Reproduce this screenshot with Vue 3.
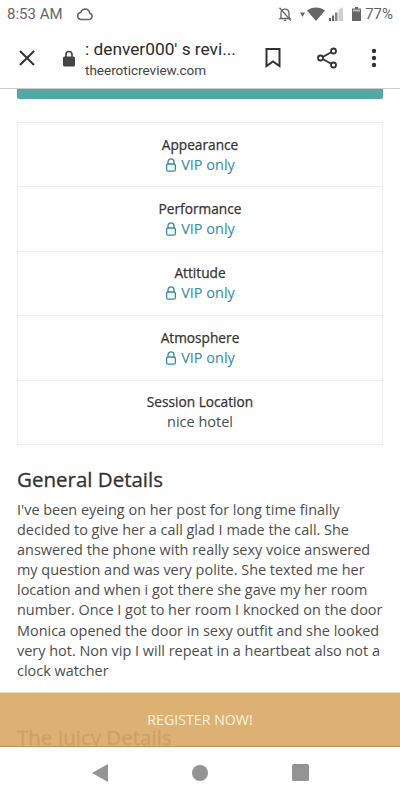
<script setup>
const rows = [
  { label: 'Appearance', locked: true },
  { label: 'Performance', locked: true },
  { label: 'Attitude', locked: true },
  { label: 'Atmosphere', locked: true },
  { label: 'Session Location', value: 'nice hotel' },
]
</script>

<template>
  <div class="phone">
    <div class="status">
      <span class="time">8:53 AM</span>
      <svg class="cloud" width="18" height="14" viewBox="0 0 18 14">
        <path d="M4.6 12.5h8.6a3.2 3.2 0 0 0 .5-6.3A4.9 4.9 0 0 0 8.9 2 5 5 0 0 0 4.6 5.6a3.5 3.5 0 0 0 0 6.9z" fill="none" stroke="#666" stroke-width="1.5" />
      </svg>
      <span class="spacer"></span>
      <svg class="bell" width="16" height="16" viewBox="0 0 16 16">
        <path d="M4 11.5V7.5C4 5 5.6 3.2 8 3.2S12 5 12 7.5v4l1 1H3z" fill="none" stroke="#666" stroke-width="1.3" />
        <path d="M6.8 14.2h2.4" stroke="#666" stroke-width="1.3" />
        <path d="M2.5 1.8 13.8 14.6" stroke="#666" stroke-width="1.3" />
      </svg>
      <svg class="arrow" width="5" height="5" viewBox="0 0 5 5"><path d="M0 .5h5L2.5 5z" fill="#666" /></svg>
      <svg class="wifi" width="18" height="14" viewBox="0 0 18 14"><path d="M0 3.5C2.5 1.4 5.6.4 9 .4s6.500 1 9 3.100L9 14z" fill="#666" /></svg>
      <svg class="signal" width="14" height="14" viewBox="0 0 14 14">
        <rect x="0" y="11" width="2" height="3" fill="#666" />
        <rect x="3" y="8.500" width="2" height="5.500" fill="#666" />
        <rect x="6" y="5.500" width="2.500" height="8.500" fill="#888" />
        <path d="M9.500 3 14 0v14H9.500z" fill="#d0d0d0" />
      </svg>
      <svg class="battery" width="9" height="14" viewBox="0 0 9 14">
        <path d="M3 0h3v1.500h3V14H0V1.500h3z" fill="#666" />
        <path d="M1 2.500h7v2H1z" fill="#bbb" />
      </svg>
      <span class="pct">77%</span>
    </div>

    <div class="toolbar">
      <svg class="close" width="18" height="18" viewBox="0 0 18 18">
        <path d="M2 2l14 14M16 2 2 16" stroke="#333" stroke-width="2" />
      </svg>
      <svg class="lock" width="14" height="17" viewBox="0 0 14 17">
        <path d="M4 7V4.500a3 3 0 0 1 6 0V7" fill="none" stroke="#444" stroke-width="1.600" />
        <rect x="1" y="6.500" width="12" height="10" rx="1.500" fill="#444" />
      </svg>
      <div class="address">
        <div class="page-title">: denver000' s revi...</div>
        <div class="domain">theeroticreview.com</div>
      </div>
      <svg class="bookmark" width="16" height="20" viewBox="0 0 16 20">
        <path d="M1.500 1h13v17L8 13.500 1.500 18z" fill="none" stroke="#333" stroke-width="2" />
      </svg>
      <svg class="share" width="22" height="22" viewBox="0 0 22 22">
        <path d="M16.500 4.500 5 11l11.500 6.500" fill="none" stroke="#333" stroke-width="1.800" />
        <circle cx="17.500" cy="4" r="2.500" fill="#fff" stroke="#333" stroke-width="1.800" />
        <circle cx="4.500" cy="11" r="2.500" fill="#fff" stroke="#333" stroke-width="1.800" />
        <circle cx="17.500" cy="18" r="2.500" fill="#fff" stroke="#333" stroke-width="1.800" />
      </svg>
      <svg class="more" width="6" height="20" viewBox="0 0 6 20">
        <circle cx="3" cy="3" r="2.200" fill="#333" />
        <circle cx="3" cy="10" r="2.200" fill="#333" />
        <circle cx="3" cy="17" r="2.200" fill="#333" />
      </svg>
    </div>

    <div class="content">
      <div class="teal-btn"></div>

      <div class="ratings">
        <div v-for="row in rows" :key="row.label" class="rating">
          <div class="rating-label">{{ row.label }}</div>
          <div v-if="row.locked" class="vip">
            <svg width="12" height="14" viewBox="0 0 12 14">
              <path d="M3 6V3.800a3 3 0 0 1 6 0V6" fill="none" stroke="#2f8aa5" stroke-width="1.300" />
              <rect x="1.600" y="6" width="8.800" height="7.200" rx="1.500" fill="none" stroke="#2f8aa5" stroke-width="1.300" />
            </svg>
            VIP only
          </div>
          <div v-else class="rating-value">{{ row.value }}</div>
        </div>
      </div>

      <h2 class="heading">General Details</h2>
      <p class="body">I've been eyeing on her post for long time finally decided to give her a call glad I made the call. She answered the phone with really sexy voice answered my question and was very polite. She texted me her location and when i got there she gave my her room number. Once I got to her room I knocked on the door Monica opened the door in sexy outfit and she looked very hot. Non vip I will repeat in a heartbeat also not a clock watcher</p>
      <h2 class="heading juicy">The Juicy Details</h2>

      <div class="register">REGISTER NOW!</div>
    </div>

    <div class="navbar">
      <svg width="16" height="18" viewBox="0 0 16 18"><path d="M16 0v18L0 9z" fill="#949494" /></svg>
      <svg width="16" height="16" viewBox="0 0 16 16"><circle cx="8" cy="8" r="8" fill="#949494" /></svg>
      <svg width="17" height="17" viewBox="0 0 17 17"><rect width="17" height="17" rx="1.500" fill="#949494" /></svg>
    </div>
  </div>
</template>

<style>
html, body {
  background: #fff;
}
</style>

<style scoped>
.phone {
  width: 400px;
  height: 800px;
  display: flex;
  flex-direction: column;
  overflow: hidden;
  background: #fff;
  font-family: "Open Sans", sans-serif;
  color: #333;
}

.status {
  height: 28px;
  flex: none;
  display: flex;
  align-items: center;
  padding: 0 7px;
  font-family: Roboto, sans-serif;
  font-size: 15px;
  color: #666;
}

.cloud {
  margin-left: 13px;
}

.spacer {
  flex: 1;
}

.arrow {
  margin-left: 7px;
}

.wifi {
  margin-left: 2px;
}

.signal {
  margin-left: 4px;
}

.battery {
  margin-left: 9px;
}

.pct {
  margin-left: 4px;
}

.toolbar {
  height: 61px;
  flex: none;
  box-sizing: border-box;
  display: flex;
  align-items: center;
  border-bottom: 1px solid #ccc;
  font-family: Roboto, sans-serif;
  padding-left: 18px;
}

.lock {
  margin-left: 26px;
}

.address {
  width: 155px;
  margin-left: 9px;
}

.page-title {
  font-size: 17.300px;
  line-height: 24px;
  color: #2b2b2b;
  white-space: nowrap;
}

.domain {
  font-size: 13.500px;
  line-height: 18px;
  color: #444;
}

.bookmark {
  margin-left: 25px;
}

.share {
  margin-left: 35px;
}

.more {
  margin-left: 33px;
}

.content {
  flex: 1;
  position: relative;
  overflow: hidden;
  padding: 0 17px;
}

.teal-btn {
  height: 10px;
  background: #52a8a5;
  border-radius: 0 0 2px 2px;
}

.ratings {
  margin-top: 23px;
  border: 1px solid #eee;
}

.rating {
  height: 64.400px;
  box-sizing: border-box;
  display: flex;
  flex-direction: column;
  justify-content: center;
  align-items: center;
  border-bottom: 1px solid #eee;
  font-size: 14.500px;
  line-height: 20px;
}

.rating:last-child {
  height: 63.400px;
  border-bottom: 0;
}

.rating-label {
  font-size: 13.700px;
  -webkit-text-stroke: 0.25px #333;
  color: #333;
}

.vip {
  display: flex;
  align-items: center;
  gap: 4px;
  color: #2f8aa5;
}

.rating-value {
  color: #4d4d4d;
}

.heading {
  margin: 20px 0 0;
  font-size: 20.500px;
  line-height: 28px;
  -webkit-text-stroke: 0.3px #333;
  font-weight: 400;
  color: #333;
}

.body {
  margin: 7px 0 0;
  font-size: 14.450px;
  line-height: 20.100px;
  color: #4d4d4d;
}

.juicy {
  margin-top: 42px;
}

.register {
  position: absolute;
  left: 0;
  right: 0;
  bottom: 0;
  height: 55px;
  box-sizing: border-box;
  padding-top: 17px;
  text-align: center;
  font-size: 14.200px;
  color: #fdf3df;
  background: rgba(218, 169, 103, 0.92);
  border-top: 1px solid #f0dcbc;
  border-bottom: 1px solid #b89460;
}

.navbar {
  height: 53px;
  flex: none;
  display: flex;
  align-items: center;
  justify-content: center;
  gap: 84px;
  padding-bottom: 2px;
  box-sizing: border-box;
}
</style>
